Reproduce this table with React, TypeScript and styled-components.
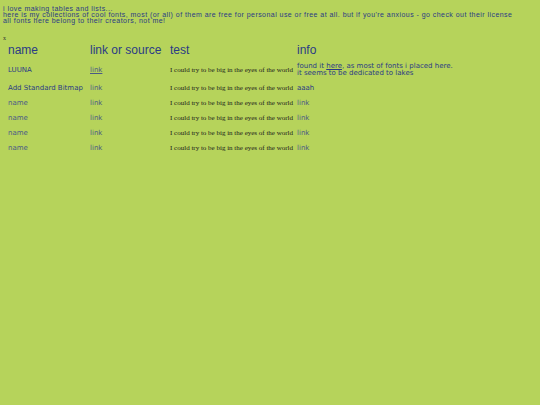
import React from "react";
import styled, { createGlobalStyle } from "styled-components";

const Global = createGlobalStyle`
  html, body { margin: 0; padding: 0; background: #b6d35b; }
  body { font-family: "Liberation Sans", Arial, sans-serif; color: #2b3b85; }
`;

const Page = styled.div`
  padding: 6px 3px;
`;

const Intro = styled.div`
  font-size: 7px;
  letter-spacing: 0.45px;
  line-height: 6px;
  color: #2b3b85;
`;

const Mark = styled.div`
  margin-top: 11px;
  font-family: "Liberation Serif", serif;
  font-size: 6px;
  color: #333;
`;

const Table = styled.table`
  border-collapse: collapse;
  table-layout: fixed;
  width: 534px;
  margin-top: 1px;
`;

const Th = styled.th<{ $w?: number }>`
  box-sizing: border-box;
  text-align: left;
  font-weight: normal;
  font-size: 12px;
  line-height: 14px;
  padding: 1px 5px 2px 5px;
  color: #2b3b85;
  white-space: nowrap;
  width: ${(p) => (p.$w ? `${p.$w}px` : "auto")};
`;

const Td = styled.td<{ $serif?: boolean; $muted?: boolean; $tall?: boolean }>`
  font-family: ${(p) => (p.$serif ? '"Liberation Serif", serif' : '"DejaVu Sans", sans-serif')};
  font-size: 7px;
  line-height: ${(p) => (p.$tall ? "6.5px" : "6px")};
  padding: ${(p) => (p.$tall ? "4px 5px" : "4.5px 5px")};
  color: ${(p) => (p.$serif ? "#1a1a1a" : p.$muted ? "#4b5a86" : "#2b3b85")};
  vertical-align: middle;
  white-space: nowrap;
`;

const A = styled.span`
  text-decoration: underline;
  text-underline-offset: 1px;
`;

const rows = [
  { name: "LUUNA", link: true, info: "luuna" },
  { name: "Add Standard Bitmap", link: false, info: "aaah" },
  { name: "name", link: false, info: "link" },
  { name: "name", link: false, info: "link" },
  { name: "name", link: false, info: "link" },
  { name: "name", link: false, info: "link" },
];

export default function App() {
  return (
    <>
      <Global />
      <Page>
        <Intro>
          i love making tables and lists...
          <br />
          here is my collections of cool fonts, most (or all) of them are free for personal use or free at all. but if you're anxious - go check out their license
          <br />
          all fonts here belong to their creators, not me!
        </Intro>
        <Mark>x</Mark>
        <Table>
          <thead>
            <tr>
              <Th $w={82}>name</Th>
              <Th $w={80}>link or source</Th>
              <Th $w={127}>test</Th>
              <Th>info</Th>
            </tr>
          </thead>
          <tbody>
            {rows.map((r, i) => (
              <tr key={i}>
                <Td $muted={i > 1}>{r.name}</Td>
                <Td $muted>{r.link ? <A>link</A> : "link"}</Td>
                <Td $serif>I could try to be big in the eyes of the world</Td>
                <Td $muted={i > 1} $tall={r.info === "luuna"}>
                  {r.info === "luuna" ? (
                    <>
                      found it <A>here</A>, as most of fonts i placed here.
                      <br />
                      it seems to be dedicated to lakes
                    </>
                  ) : (
                    r.info
                  )}
                </Td>
              </tr>
            ))}
          </tbody>
        </Table>
      </Page>
    </>
  );
}
